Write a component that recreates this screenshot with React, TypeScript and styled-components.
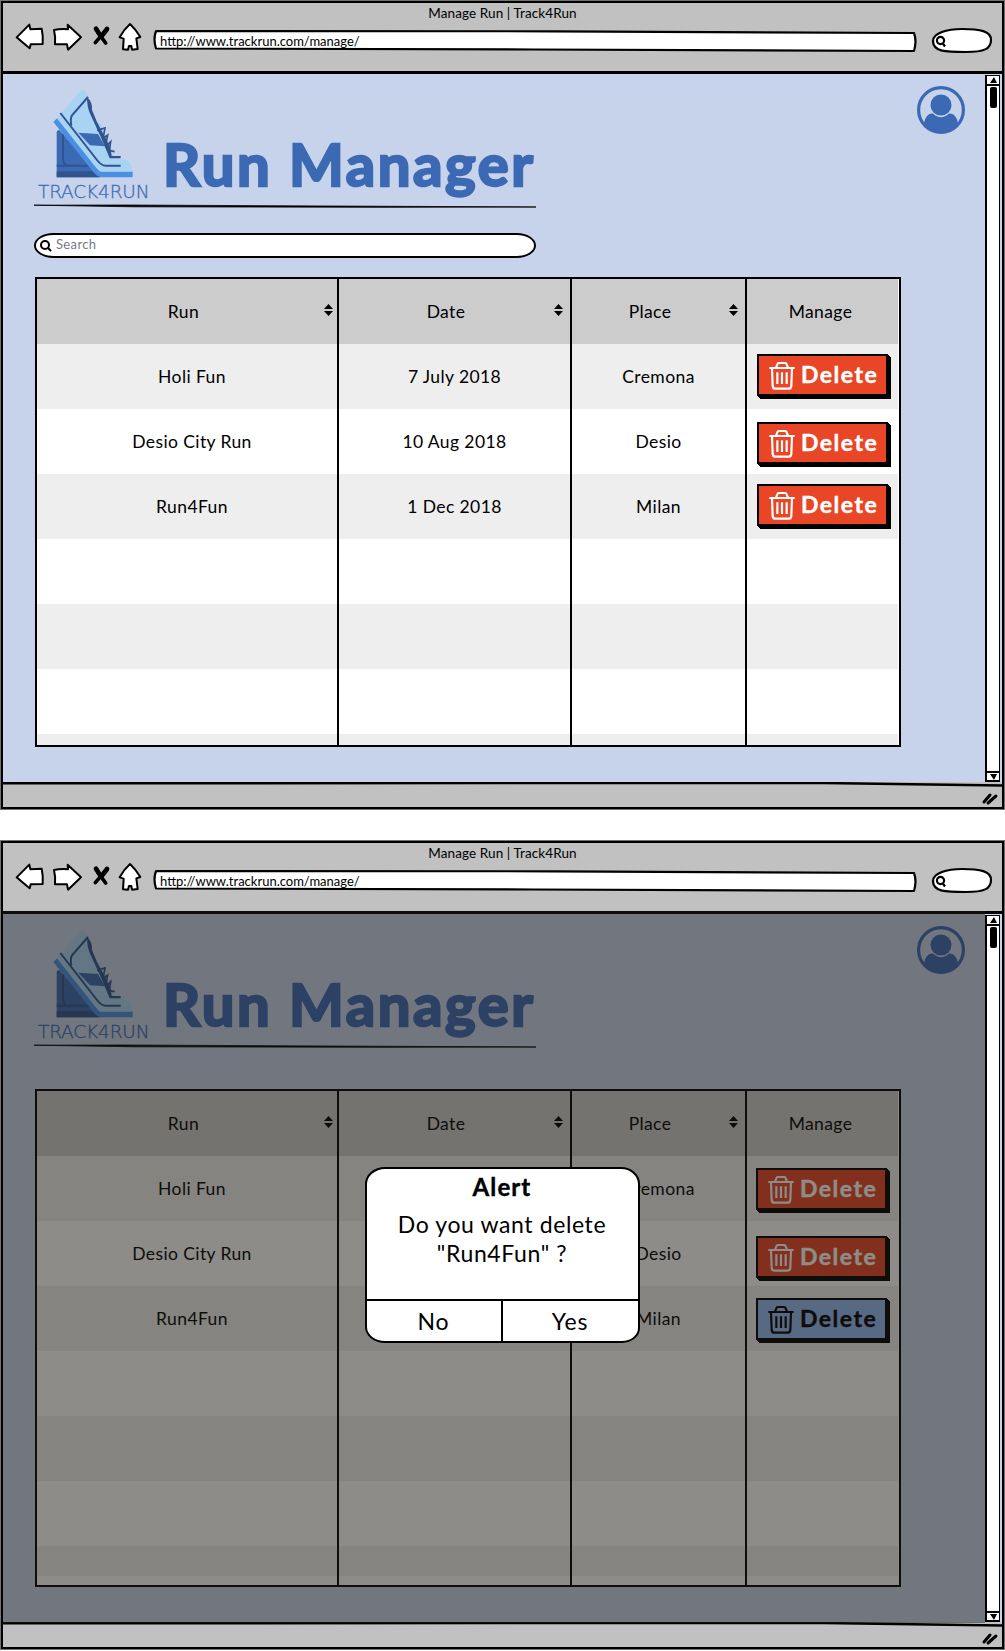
import React from "react";
import styled, { createGlobalStyle } from "styled-components";

const ink = "#000";
const brand = "#3c69b3";

const Global = createGlobalStyle`
  * { box-sizing: border-box; }
  body { margin: 0; background: #fff; color: ${ink}; font-family: Lato, "Open Sans", sans-serif; }
  svg { display: block; flex: none; overflow: visible; }
  h1, h2, p { margin: 0; }
  button { font: inherit; color: inherit; margin: 0; padding: 0; border: 0; background: none; }
`;

const Page = styled.div`
  display: flex; flex-direction: column; gap: 32px;
  width: 1005px; height: 1651px; padding: 1px; overflow: hidden;
`;
const Frame = styled.section`
  display: flex; flex-direction: column; flex: none;
  height: 808px; border: 2px solid ${ink}; box-shadow: 0 0 0 1px rgba(0,0,0,.55);
  background: #c1c1c1;
`;
const Chrome = styled.header`height: 71px; flex: none; border-bottom: 3px solid ${ink};`;
const PageTitle = styled.div`
  height: 20px; text-align: center; font-size: 13.5px; line-height: 20px; letter-spacing: .1px;
`;
const NavRow = styled.nav`display: flex; align-items: flex-start; height: 30px; margin-top: -1px; padding-left: 11px;`;
const Icons = styled.div`display: flex; gap: 5px; width: 139px;`;
const Stack = styled.div<{ $w: number; $h: number }>`
  display: grid; width: ${p => p.$w}px; height: ${p => p.$h}px; flex: none; margin-top: 7px;
  & > * { grid-area: 1 / 1; }
`;
const Address = styled.span`padding: 1px 0 0 7px; font-size: 13px; line-height: 22px; letter-spacing: 0;`;
const PillSlot = styled.div`margin: 5px 0 0 15px;`;

const Body = styled.div`display: flex; height: 708px; flex: none; position: relative; background: #c7d3eb;`;
const Main = styled.main`width: 982px; padding: 14px 0 0 31px;`;
const Brand = styled.div`display: flex; height: 115px; padding-left: 4px;`;
const Logo = styled.div`display: flex; flex-direction: column; width: 111px; flex: none;`;
const ShoeBox = styled.div`padding: 1px 0 0 15px; height: 94px;`;
const LogoText = styled.div`
  font-family: "DejaVu Sans Light", "DejaVu Sans", sans-serif; font-weight: 200;
  color: ${brand}; font-size: 18.5px; line-height: 20px; letter-spacing: -.15px; white-space: nowrap;
  -webkit-text-stroke: .3px ${brand};
`;
const Title = styled.h1`
  padding: 32px 0 0 14px; color: ${brand}; font-size: 58px; line-height: 88px; font-weight: 700;
  letter-spacing: 2.6px; white-space: nowrap; -webkit-text-stroke: 2.4px ${brand};
`;
const Avatar = styled.div`margin-left: auto; margin-top: -3px; padding-right: 20px;`;
const Rule = styled.div`height: 5px;`;
const SearchBox = styled.div`
  display: flex; align-items: center; gap: 4px; width: 502px; height: 25px; margin-top: 25px;
  padding: 0 0 3px 4px; border: 2px solid ${ink}; border-radius: 20px / 13px; background: #fff;
  color: #777983; font-size: 13px; letter-spacing: .35px;
`;

const Table = styled.div<{ $top: number; $h: number }>`
  display: grid; grid-template-columns: 302px 233px 175px 151px; grid-auto-rows: 65px;
  width: 866px; height: ${p => p.$h}px; margin-top: ${p => p.$top}px; margin-left: 1px; overflow: hidden;
  border: 2px solid ${ink}; background: #fff;
`;
const Cell = styled.div<{ $tone: string; $last?: boolean; $pad?: number }>`
  display: flex; align-items: center; justify-content: center;
  height: 65px; padding-left: ${p => p.$pad ?? 0}px; padding-bottom: 1px;
  background: ${p => p.$tone}; border-right: ${p => (p.$last ? 0 : 2)}px solid ${ink};
  font-size: 17.5px; letter-spacing: .4px; white-space: nowrap;
`;
const HeadLabel = styled.span<{ $shift: boolean }>`
  flex: 1; text-align: center; padding-right: ${p => (p.$shift ? 1 : 4)}px;
`;
const SortSlot = styled.span<{ $gap: number }>`padding-right: ${p => p.$gap}px; padding-bottom: 2px;`;

const ButtonSlot = styled.div<{ $top: number; $left: number }>`
  align-self: flex-start; width: 100%; padding: ${p => p.$top}px 0 0 ${p => p.$left}px;
`;
const DeleteButton = styled.button<{ $blue?: boolean }>`
  display: flex; align-items: center; gap: 6px; width: 131px; height: 42px; padding: 0 0 2px 10px;
  border: 2px solid ${ink}; box-shadow: 1px 1px 0 ${ink}, 2px 2px 0 ${ink}, 3px 3px 0 ${ink};
  background: ${p => (p.$blue ? "#94baf2" : "#e84626")}; color: ${p => (p.$blue ? ink : "#fff")};
  font-size: 23px; font-weight: 700; letter-spacing: 1.5px; -webkit-text-stroke: .4px currentColor;
  & > svg { margin-top: 3px; }
`;

const Scrollbar = styled.div`
  display: flex; flex-direction: column; align-items: center; width: 15px; margin-top: 1px;
  border: 2px solid ${ink}; border-width: 0 1px 0 2px; background: #fff;
`;
const ScrollEnd = styled.div<{ $bottom?: boolean }>`
  display: flex; align-items: center; justify-content: center; width: 12px; height: 11px;
  border: 1px solid ${ink}; border-width: ${p => (p.$bottom ? "2px 0 2px" : "1px 0 2px")};
  margin-top: ${p => (p.$bottom ? "auto" : "0")};
`;
const Thumb = styled.div`width: 7px; height: 21px; margin-top: 1px; border-radius: 2px; background: ${ink};`;
const Footer = styled.footer`
  display: flex; flex-direction: column; height: 25px; flex: none;
`;
const Grip = styled.div`align-self: flex-end; padding: 7px 4px 0 0;`;

const Shade = styled.div`
  position: absolute; inset: -3px 17px -1px 0; display: flex; align-items: center; justify-content: center;
  padding: 0 0 24px 16px; background: rgba(28, 26, 20, .5);
`;
const Dialog = styled.div`
  display: flex; flex-direction: column; width: 275px; height: 176px; text-align: center; overflow: hidden;
  border: 2px solid ${ink}; border-radius: 20px 19px 18px 20px / 17px 17px 15px 16px; background: #fff;
`;
const DialogTitle = styled.h2`
  font-size: 24px; line-height: 33px; font-weight: 700; letter-spacing: 1.1px; padding-top: 1px;
  -webkit-text-stroke: .4px ${ink};
`;
const DialogText = styled.p`font-size: 23px; line-height: 29px; letter-spacing: .6px; padding-top: 7px; flex: 1;`;
const Actions = styled.div`display: grid; grid-template-columns: 136px 1fr; height: 42px; border-top: 2px solid ${ink};`;
const Action = styled.button<{ $divided?: boolean }>`
  font-size: 23px; letter-spacing: .8px; padding-bottom: 1px;
  border-right: ${p => (p.$divided ? 2 : 0)}px solid ${ink};
`;

const NavIcons = () => (
  <Icons>
    <svg width="32" height="30" viewBox="42 66 96 90" fill="#fff" stroke="#000" strokeWidth="6" strokeLinejoin="round">
      <path d="M50 112L88 74L91 88L125 86Q130 108 128 132L92 133L89 145L70 129Z" />
    </svg>
    <svg width="34" height="30" viewBox="152 66 102 90" fill="#fff" stroke="#000" strokeWidth="6" strokeLinejoin="round">
      <path d="M161 90Q180 86 203 88L202 74L242 112L203 149L200 133L164 133Q166 110 161 90Z" />
    </svg>
    <svg width="20" height="30" viewBox="272 66 60 90" fill="none" stroke="#000" strokeWidth="11" strokeLinecap="round">
      <path d="M290 86L305 110L319 129M324 86L288 128" />
      <path d="M290 86L304 108M323 87L308 107" strokeWidth="14" />
    </svg>
    <svg width="28" height="30" viewBox="345 66 84 90" fill="#fff" stroke="#000" strokeWidth="6" strokeLinejoin="round">
      <path d="M390 72Q407 88 421 111L409 115L413 147L396 149L394 138L387 138L384 149L369 148L371 116L359 112Q372 88 390 72Z" />
    </svg>
  </Icons>
);

const Shoe = () => (
  <svg width="80" height="90" viewBox="100 40 240 270" fill="none">
    <path d="M111 170Q112 163 119 163L245 305H111Z" fill="#3c69b3" />
    <path d="M111 287H225L240 305H111Z" fill="#31548f" />
    <path d="M130 174V252Q132 266 143 270M111 270H212" stroke="#31548f" strokeWidth="6" />
    <path d="M101 139L112 128L240 287H339V305H245Q232 303 224 293Z" fill="#4b8fe3" />
    <path d="M112 128L180 48Q188 40 197 48L207 64L216 98L230 138L245 143L252 165L274 215L285 244L326 255Q337 267 338 288H246Q238 287 230 277Z" fill="#a9d3f2" />
    <path d="M176 171L235 175L256 212L211 209Z" fill="#3c69b3" />
    <path d="M122 112L232 253Q245 270 258 270H303M205 64L157 119Q151 130 155 150" stroke="#31548f" strokeWidth="6" />
    <path d="M202 65Q219 79 217 103L232 139L258 188L273 220L276 241H303V248H270L246 190L213 118Q202 98 202 65Z" fill="#31548f" />
    <path d="M232 164L256 157L251 184M247 190L264 178L259 204M258 213L273 198L269 225L285 228" stroke="#31548f" strokeWidth="5" />
  </svg>
);

const Trash = () => (
  <svg width="26" height="28" viewBox="0 0 78 84" fill="none" stroke="currentColor" strokeWidth="6.5" strokeLinejoin="round">
    <path d="M1 18H77M21 17L26 5Q27 3 30 3H48Q51 3 52 5L57 17" />
    <path d="M9 19L11 72Q12 80 19 80H59Q66 80 67 72L69 19" />
    <path d="M25 31V66M39 31V66M53 31V66" />
  </svg>
);

const Sort = () => (
  <svg width="9" height="12" viewBox="0 0 9 12"><path d="M0 5L4.5 0L9 5ZM0 7H9L4.5 12Z" /></svg>
);

const runs = [
  ["Holi Fun", "7 July 2018", "Cremona"],
  ["Desio City Run", "10 Aug 2018", "Desio"],
  ["Run4Fun", "1 Dec 2018", "Milan"],
];

function RunTable({ top, height, selected }: { top: number; height: number; selected?: number }) {
  const asking = selected !== undefined;
  const tone = (r: number) =>
    asking && r === 6 ? "linear-gradient(#eee 30px, #fff 30px)" : r % 2 ? "#fff" : "#eee";
  return (
    <Table $top={top} $h={height}>
      {["Run", "Date", "Place", "Manage"].map((name, c) => (
        <Cell key={name} $tone="#ccc" $last={c === 3} $pad={c === 0 ? 7 : 0}>
          <HeadLabel $shift={c < 3}>{name}</HeadLabel>
          {c < 3 && <SortSlot $gap={c === 0 ? 4 : 7}><Sort /></SortSlot>}
        </Cell>
      ))}
      {Array.from({ length: 7 }, (_, r) =>
        [0, 1, 2, 3].map(c => (
          <Cell key={`${r}-${c}`} $tone={tone(r)} $last={c === 3} $pad={c === 0 ? 10 : 0}>
            {c < 3 ? !(asking && c === 1) && runs[r]?.[c] : r < 3 && (
              <ButtonSlot $top={(r === 1 ? 13 : 10) + (asking ? 2 : 0)} $left={asking ? 9 : 10}>
                <DeleteButton $blue={selected === r}><Trash />Delete</DeleteButton>
              </ButtonSlot>
            )}
          </Cell>
        ))
      )}
    </Table>
  );
}

function Browser({ confirm }: { confirm?: boolean }) {
  return (
    <Frame>
      <Chrome>
        <PageTitle>Manage Run | Track4Run</PageTitle>
        <NavRow>
          <NavIcons />
          <Stack $w={763} $h={24}>
            <svg width="763" height="24" fill="#fff" stroke="#000" strokeWidth="2.2" strokeLinejoin="round">
              <path d="M3 2Q0 10 3 19.5L380 20.5L761 22Q764 12 761 4L400 2.3Z" />
            </svg>
            <Address>http://www.trackrun.com/manage/</Address>
          </Stack>
          <PillSlot>
            <svg width="62" height="27" fill="#fff" stroke="#000" strokeWidth="2.2">
              <path d="M2 14C2 6 16 2 31 2C49 2 60 4 60 13C60 22 53 25 35 25C15 25 2 25 2 14Z" />
              <circle cx="9.5" cy="13.5" r="3.6" /><path d="M11.5 16L14 19.5" />
            </svg>
          </PillSlot>
        </NavRow>
      </Chrome>
      <Body>
        <Main>
          <Brand>
            <Logo>
              <ShoeBox><Shoe /></ShoeBox>
              <LogoText>TRACK4RUN</LogoText>
            </Logo>
            <Title>Run Manager</Title>
            <Avatar>
              <svg width="48" height="50" viewBox="0 0 48 50">
                <circle cx="24" cy="25" r="22.4" fill="none" stroke={brand} strokeWidth="3.2" />
                <circle cx="24" cy="20" r="10.5" fill={brand} />
                <path d="M7 38Q9 28 16 28.5Q24 36 32 28.5Q39 28 41 38Q35 48 24 48Q13 48 7 38Z" fill={brand} />
              </svg>
            </Avatar>
          </Brand>
          <Rule>
            <svg width="502" height="5"><path d="M0 2.2L90 2L502 4L350 4.3L100 3.8Z" stroke="#000" strokeWidth=".8" /></svg>
          </Rule>
          {!confirm && (
            <SearchBox>
              <svg width="12" height="13" fill="none" stroke="#000" strokeWidth="2">
                <circle cx="5" cy="7" r="4" /><path d="M8 10L11 13" />
              </svg>
              Search
            </SearchBox>
          )}
          <RunTable top={confirm ? 41 : 19} height={confirm ? 498 : 470} selected={confirm ? 2 : undefined} />
        </Main>
        <Scrollbar>
          <ScrollEnd><svg width="7" height="6"><path d="M0 6L4 0L7 6Z" /></svg></ScrollEnd>
          <Thumb />
          <ScrollEnd $bottom><svg width="7" height="6"><path d="M0 0H7L4 6Z" /></svg></ScrollEnd>
        </Scrollbar>
        {confirm && (
          <Shade>
            <Dialog>
              <DialogTitle>Alert</DialogTitle>
              <DialogText>Do you want delete<br />"Run4Fun" ?</DialogText>
              <Actions><Action $divided>No</Action><Action>Yes</Action></Actions>
            </Dialog>
          </Shade>
        )}
      </Body>
      <Footer>
        <svg width="999" height="3" fill="none" stroke="#000" strokeWidth="2.5"><path d="M0 1.2L820 1L999 3.5" /></svg>
        <Grip>
          <svg width="16" height="14" stroke="#000" strokeWidth="3" strokeLinecap="round"><path d="M2 10L8 3M6 11L14 4" /></svg>
        </Grip>
      </Footer>
    </Frame>
  );
}

export default function App() {
  return (
    <>
      <Global />
      <Page>
        <Browser />
        <Browser confirm />
      </Page>
    </>
  );
}
